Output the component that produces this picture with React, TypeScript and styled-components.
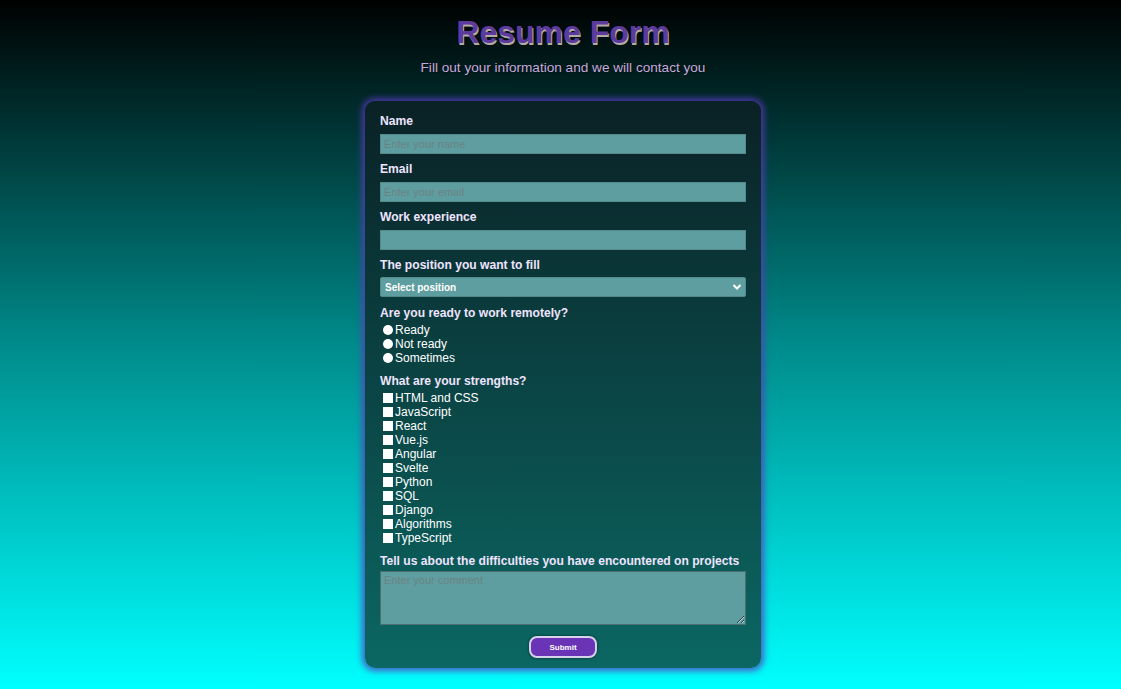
import React from "react";
import styled, { createGlobalStyle } from "styled-components";

const GlobalStyle = createGlobalStyle`
  * { box-sizing: border-box; }
  html, body { margin: 0; padding: 0; }
  body {
    font-family: "Liberation Sans", Arial, sans-serif;
    background: linear-gradient(to bottom, #000000 0%, #008b8b 50%, #00ffff 100%);
    min-height: 100vh;
  }
`;

const Page = styled.div`
  min-height: 100vh;
  display: flex;
  flex-direction: column;
  align-items: center;
  padding: 14px 0 0 5px;
`;

const Title = styled.h1`
  margin: 0;
  font-size: 32px;
  line-height: 37px;
  font-weight: bold;
  color: #5d3a9e;
  text-shadow: 1px 2px 0 #b4aca4;
`;

const Subtitle = styled.p`
  margin: 9px 0 0;
  font-size: 13.6px;
  line-height: 16px;
  color: #c7a9dc;
  text-shadow: 1px 1px 1px rgba(0, 0, 0, 0.35);
`;

const Card = styled.form`
  margin-top: 25px;
  width: 396px;
  padding: 12px 15px 10px;
  border-radius: 10px;
  background: linear-gradient(to bottom, #0a2125 0%, #0b6763 100%);
  box-shadow: 0 0 6px 3px rgba(88, 58, 190, 0.8);
  display: flex;
  flex-direction: column;
`;

const Group = styled.div<{ $space?: number }>`
  display: flex;
  flex-direction: column;
  margin-bottom: ${(p) => p.$space ?? 7}px;
`;

const Label = styled.label<{ $gap: number }>`
  display: block;
  font-size: 12.1px;
  line-height: 16px;
  font-weight: bold;
  color: #efe4ff;
  margin-bottom: ${(p) => p.$gap}px;
`;

const TextInput = styled.input`
  display: block;
  height: 20px;
  width: 100%;
  margin: 0;
  padding: 0 3px;
  border: 1px solid #548a8c;
  background: #5f9ea0;
  font-family: inherit;
  font-size: 11px;
  color: #fff;
  outline: none;
  &::placeholder { color: #6a8283; }
`;

const SelectWrap = styled.div`
  position: relative;
  width: 100%;
  height: 20px;
`;

const Select = styled.select`
  display: block;
  appearance: none;
  width: 100%;
  height: 20px;
  margin: 0;
  padding: 0 4px;
  border: 1px solid #548a8c;
  border-radius: 2px;
  background: #5f9ea0;
  color: #fff;
  font-family: inherit;
  font-size: 10px;
  font-weight: bold;
  outline: none;
`;

const Chevron = styled.svg`
  position: absolute;
  right: 4px;
  top: 6px;
  pointer-events: none;
`;

const OptionRow = styled.label`
  display: flex;
  align-items: center;
  height: 14px;
  font-size: 12px;
  color: #fff;
`;

const Mark = styled.input<{ $round?: boolean }>`
  appearance: none;
  width: 10px;
  height: 10px;
  margin: 0 2px 0 3px;
  background: #fff;
  border: none;
  border-radius: ${(p) => (p.$round ? "50%" : "0")};
`;

const TextArea = styled.textarea`
  display: block;
  width: 100%;
  height: 54px;
  margin: 0;
  padding: 2px 3px;
  border: 1px solid #4d6f70;
  background: #5f9ea0;
  font-family: inherit;
  font-size: 11px;
  color: #fff;
  outline: none;
  resize: both;
  &::placeholder { color: #6a8283; }
`;

const ButtonRow = styled.div`
  display: flex;
  justify-content: center;
  margin-top: 4px;
`;

const SubmitButton = styled.button`
  width: 68px;
  height: 22px;
  border-radius: 8px;
  border: 2px solid #d6d2ec;
  background: #6934b5;
  color: #fff;
  font-family: inherit;
  font-size: 8px;
  font-weight: bold;
  box-shadow: 0 0 3px rgba(0, 0, 0, 0.55);
  cursor: pointer;
`;

const remote = ["Ready", "Not ready", "Sometimes"];
const strengths = [
  "HTML and CSS",
  "JavaScript",
  "React",
  "Vue.js",
  "Angular",
  "Svelte",
  "Python",
  "SQL",
  "Django",
  "Algorithms",
  "TypeScript",
];

export default function App() {
  return (
    <>
      <GlobalStyle />
      <Page>
        <Title>Resume Form</Title>
        <Subtitle>Fill out your information and we will contact you</Subtitle>
        <Card onSubmit={(e) => e.preventDefault()}>
          <Group>
            <Label $gap={5} htmlFor="name">Name</Label>
            <TextInput id="name" placeholder="Enter your name" />
          </Group>
          <Group>
            <Label $gap={5} htmlFor="email">Email</Label>
            <TextInput id="email" placeholder="Enter your email" />
          </Group>
          <Group>
            <Label $gap={5} htmlFor="exp">Work experience</Label>
            <TextInput id="exp" />
          </Group>
          <Group $space={8}>
            <Label $gap={4} htmlFor="pos">The position you want to fill</Label>
            <SelectWrap>
              <Select id="pos" defaultValue="">
                <option value="">Select position</option>
                <option value="front">Frontend developer</option>
                <option value="back">Backend developer</option>
              </Select>
              <Chevron width="10" height="8" viewBox="0 0 10 8">
                <polyline points="1.5,2 5,5.5 8.5,2" fill="none" stroke="#fff" strokeWidth="2" />
              </Chevron>
            </SelectWrap>
          </Group>
          <Group $space={8}>
            <Label $gap={2}>Are you ready to work remotely?</Label>
            {remote.map((r) => (
              <OptionRow key={r}>
                <Mark type="radio" name="remote" $round />
                {r}
              </OptionRow>
            ))}
          </Group>
          <Group $space={8}>
            <Label $gap={2}>What are your strengths?</Label>
            {strengths.map((s) => (
              <OptionRow key={s}>
                <Mark type="checkbox" />
                {s}
              </OptionRow>
            ))}
          </Group>
          <Group>
            <Label $gap={2} htmlFor="comment">
              Tell us about the difficulties you have encountered on projects
            </Label>
            <TextArea id="comment" placeholder="Enter your comment" />
          </Group>
          <ButtonRow>
            <SubmitButton type="submit">Submit</SubmitButton>
          </ButtonRow>
        </Card>
      </Page>
    </>
  );
}
